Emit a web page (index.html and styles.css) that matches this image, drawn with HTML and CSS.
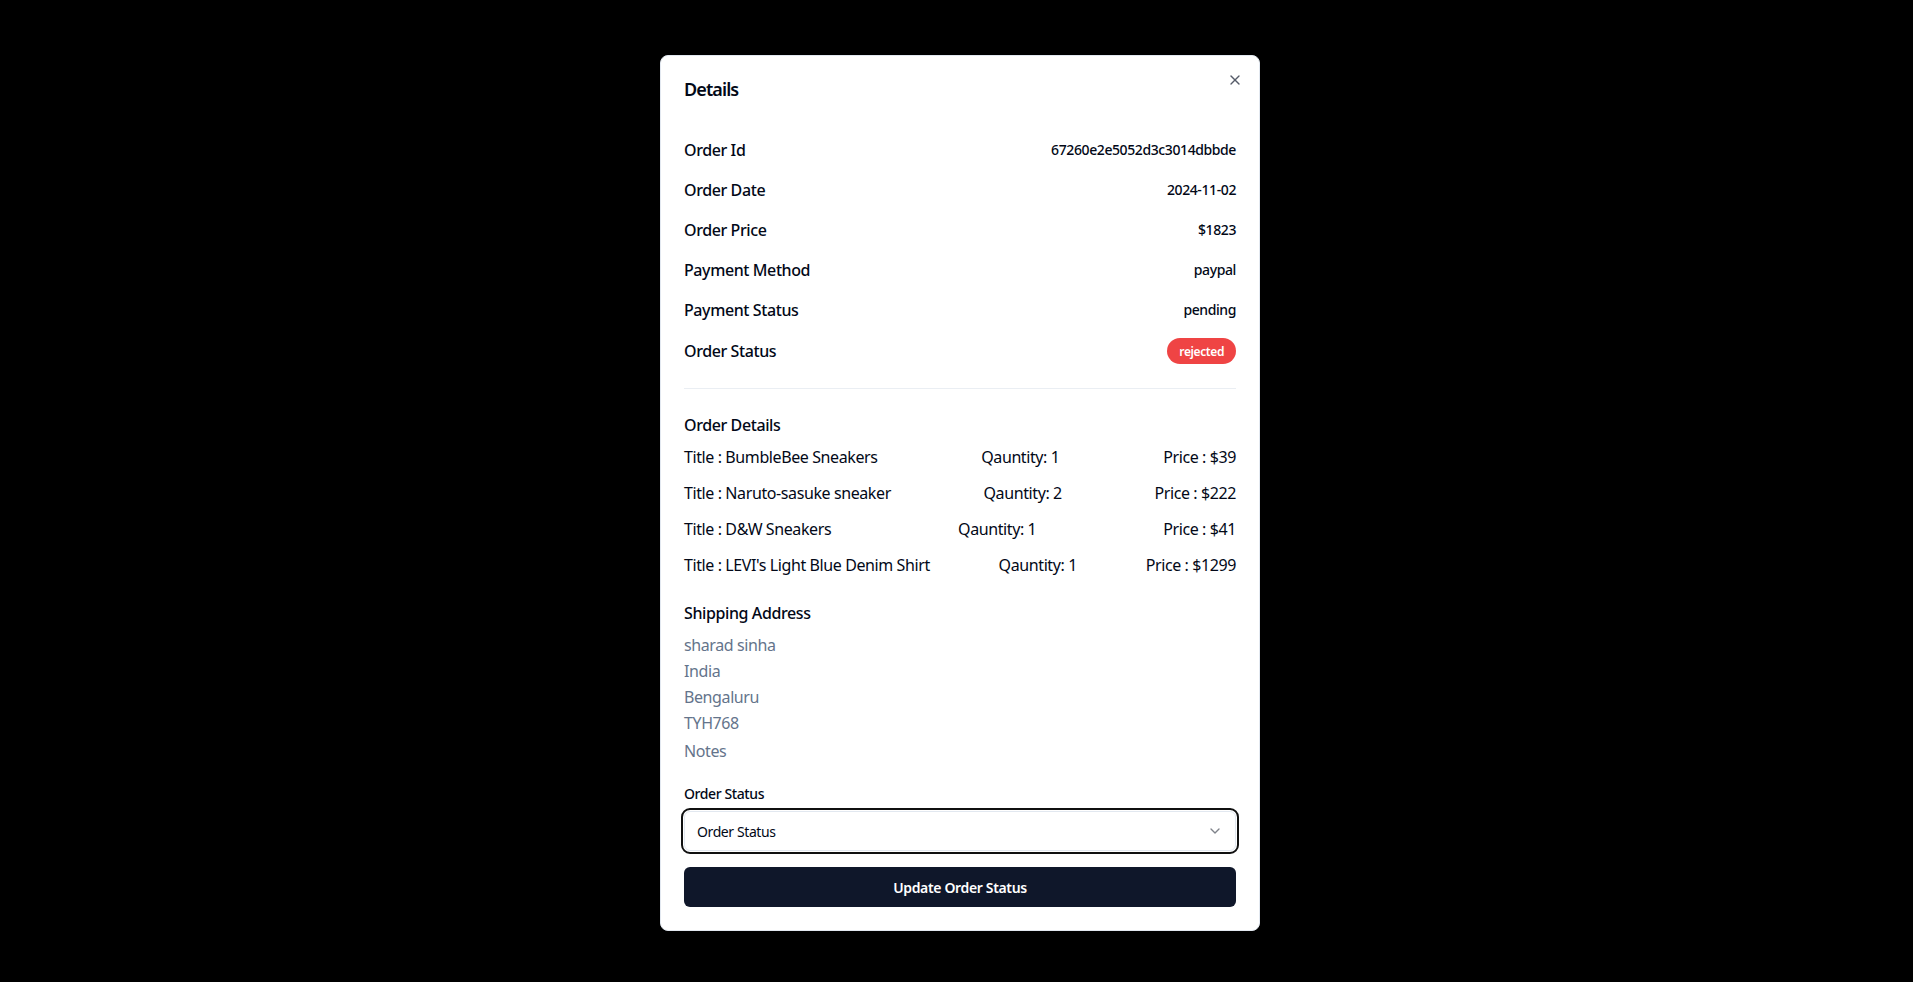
FILE: index.html
```html
<!DOCTYPE html>
<html lang="en">
<head>
<meta charset="utf-8">
<title>Order Details</title>
<link rel="stylesheet" href="styles.css">
</head>
<body>
<div class="overlay">
  <div class="dialog" role="dialog">
    <button class="close" aria-label="Close">
      <svg viewBox="0 0 24 24" width="16" height="16" fill="none" stroke="currentColor" stroke-width="2" stroke-linecap="round" stroke-linejoin="round"><path d="M18 6 6 18"/><path d="m6 6 12 12"/></svg>
    </button>
    <h2 class="title">Details</h2>
    <div class="body">
      <div class="info">
        <div class="info-row"><p class="info-label">Order Id</p><span class="info-value">67260e2e5052d3c3014dbbde</span></div>
        <div class="info-row"><p class="info-label">Order Date</p><span class="info-value">2024-11-02</span></div>
        <div class="info-row"><p class="info-label">Order Price</p><span class="info-value">$1823</span></div>
        <div class="info-row"><p class="info-label">Payment Method</p><span class="info-value">paypal</span></div>
        <div class="info-row"><p class="info-label">Payment Status</p><span class="info-value">pending</span></div>
        <div class="info-row"><p class="info-label">Order Status</p><span class="badge">rejected</span></div>
      </div>
      <div class="separator"></div>
      <div class="section">
        <div class="section-title">Order Details</div>
        <ul class="items">
          <li class="item"><span>Title : BumbleBee Sneakers</span><span>Qauntity: 1</span><span>Price : $39</span></li>
          <li class="item"><span>Title : Naruto-sasuke sneaker</span><span>Qauntity: 2</span><span>Price : $222</span></li>
          <li class="item"><span>Title : D&amp;W Sneakers</span><span>Qauntity: 1</span><span>Price : $41</span></li>
          <li class="item"><span>Title : LEVI's Light Blue Denim Shirt</span><span>Qauntity: 1</span><span>Price : $1299</span></li>
        </ul>
      </div>
      <div class="section">
        <div class="section-title">Shipping Address</div>
        <div class="address">
          <span>sharad sinha</span>
          <span>India</span>
          <span>Bengaluru</span>
          <span>TYH768</span>
          <span class="notes">Notes</span>
        </div>
      </div>
      <form class="form">
        <div class="field">
          <label class="field-label" for="status">Order Status</label>
          <div class="select" id="status">
            <span>Order Status</span>
            <svg viewBox="0 0 24 24" width="16" height="16" fill="none" stroke="currentColor" stroke-width="2" stroke-linecap="round" stroke-linejoin="round"><path d="m6 9 6 6 6-6"/></svg>
          </div>
        </div>
        <button type="button" class="submit">Update Order Status</button>
      </form>
    </div>
  </div>
</div>
</body>
</html>
```

FILE: styles.css
```css
* { box-sizing: border-box; }
html, body { margin: 0; padding: 0; }
body {
  background: #000;
  font-family: "Noto Sans", "Open Sans", sans-serif;
  color: #020817;
  letter-spacing: -0.025em;
}
.overlay {
  min-height: 100vh;
  display: flex;
  align-items: flex-start;
  justify-content: center;
  padding: 55px 0 0 7px;
}
.dialog {
  position: relative;
  width: 600px;
  background: #fff;
  border: 1px solid #e2e8f0;
  border-radius: 8px;
  padding: 24px 23px 23px;
}
.close {
  position: absolute;
  top: 16px;
  right: 16px;
  width: 16px;
  height: 16px;
  padding: 0;
  border: 0;
  background: none;
  color: #0f172a;
  opacity: .7;
  display: flex;
}
.title {
  margin: 0;
  font-size: 18px;
  font-weight: 600;
  line-height: 1;
  letter-spacing: -0.05em;
}
.body {
  margin-top: 40px;
  display: grid;
  gap: 24px;
}
.info {
  display: grid;
  gap: 16px;
}
.info-row {
  display: flex;
  align-items: center;
  justify-content: space-between;
}
.info-label {
  margin: 0;
  font-size: 16px;
  font-weight: 500;
  line-height: 24px;
}
.info-value {
  font-size: 14px;
  font-weight: 500;
  line-height: 1;
}
.badge {
  display: inline-flex;
  align-items: center;
  height: 26px;
  padding: 0 12px;
  border-radius: 999px;
  background: #ef4444;
  color: #fff;
  font-size: 12px;
  font-weight: 600;
}
.separator {
  height: 1px;
  background: #eaeef3;
}
.section {
  display: grid;
  gap: 8px;
}
.section-title {
  font-size: 16px;
  font-weight: 500;
  line-height: 24px;
}
.items {
  list-style: none;
  margin: 0;
  padding: 0;
  display: grid;
  gap: 12px;
}
.item {
  display: flex;
  align-items: center;
  justify-content: space-between;
  font-size: 16px;
  line-height: 24px;
}
.address {
  display: grid;
  gap: 2px;
  color: #64748b;
  font-size: 16px;
  line-height: 24px;
}
.notes { margin-top: 2px; }
.form {
  display: grid;
  gap: 16px;
}
.field {
  display: grid;
  gap: 10px;
}
.field-label {
  font-size: 14px;
  font-weight: 500;
  line-height: 1;
}
.select {
  height: 40px;
  display: flex;
  align-items: center;
  justify-content: space-between;
  padding: 0 12px;
  border: 1px solid #e2e8f0;
  border-radius: 6px;
  outline: 2px solid #101010;
  outline-offset: 1px;
  font-size: 14px;
}
.select svg { opacity: .5; }
.submit {
  height: 40px;
  border: 0;
  border-radius: 6px;
  background: #0f172a;
  color: #fff;
  font-family: inherit;
  font-size: 14px;
  font-weight: 600;
  letter-spacing: -0.025em;
}
```
